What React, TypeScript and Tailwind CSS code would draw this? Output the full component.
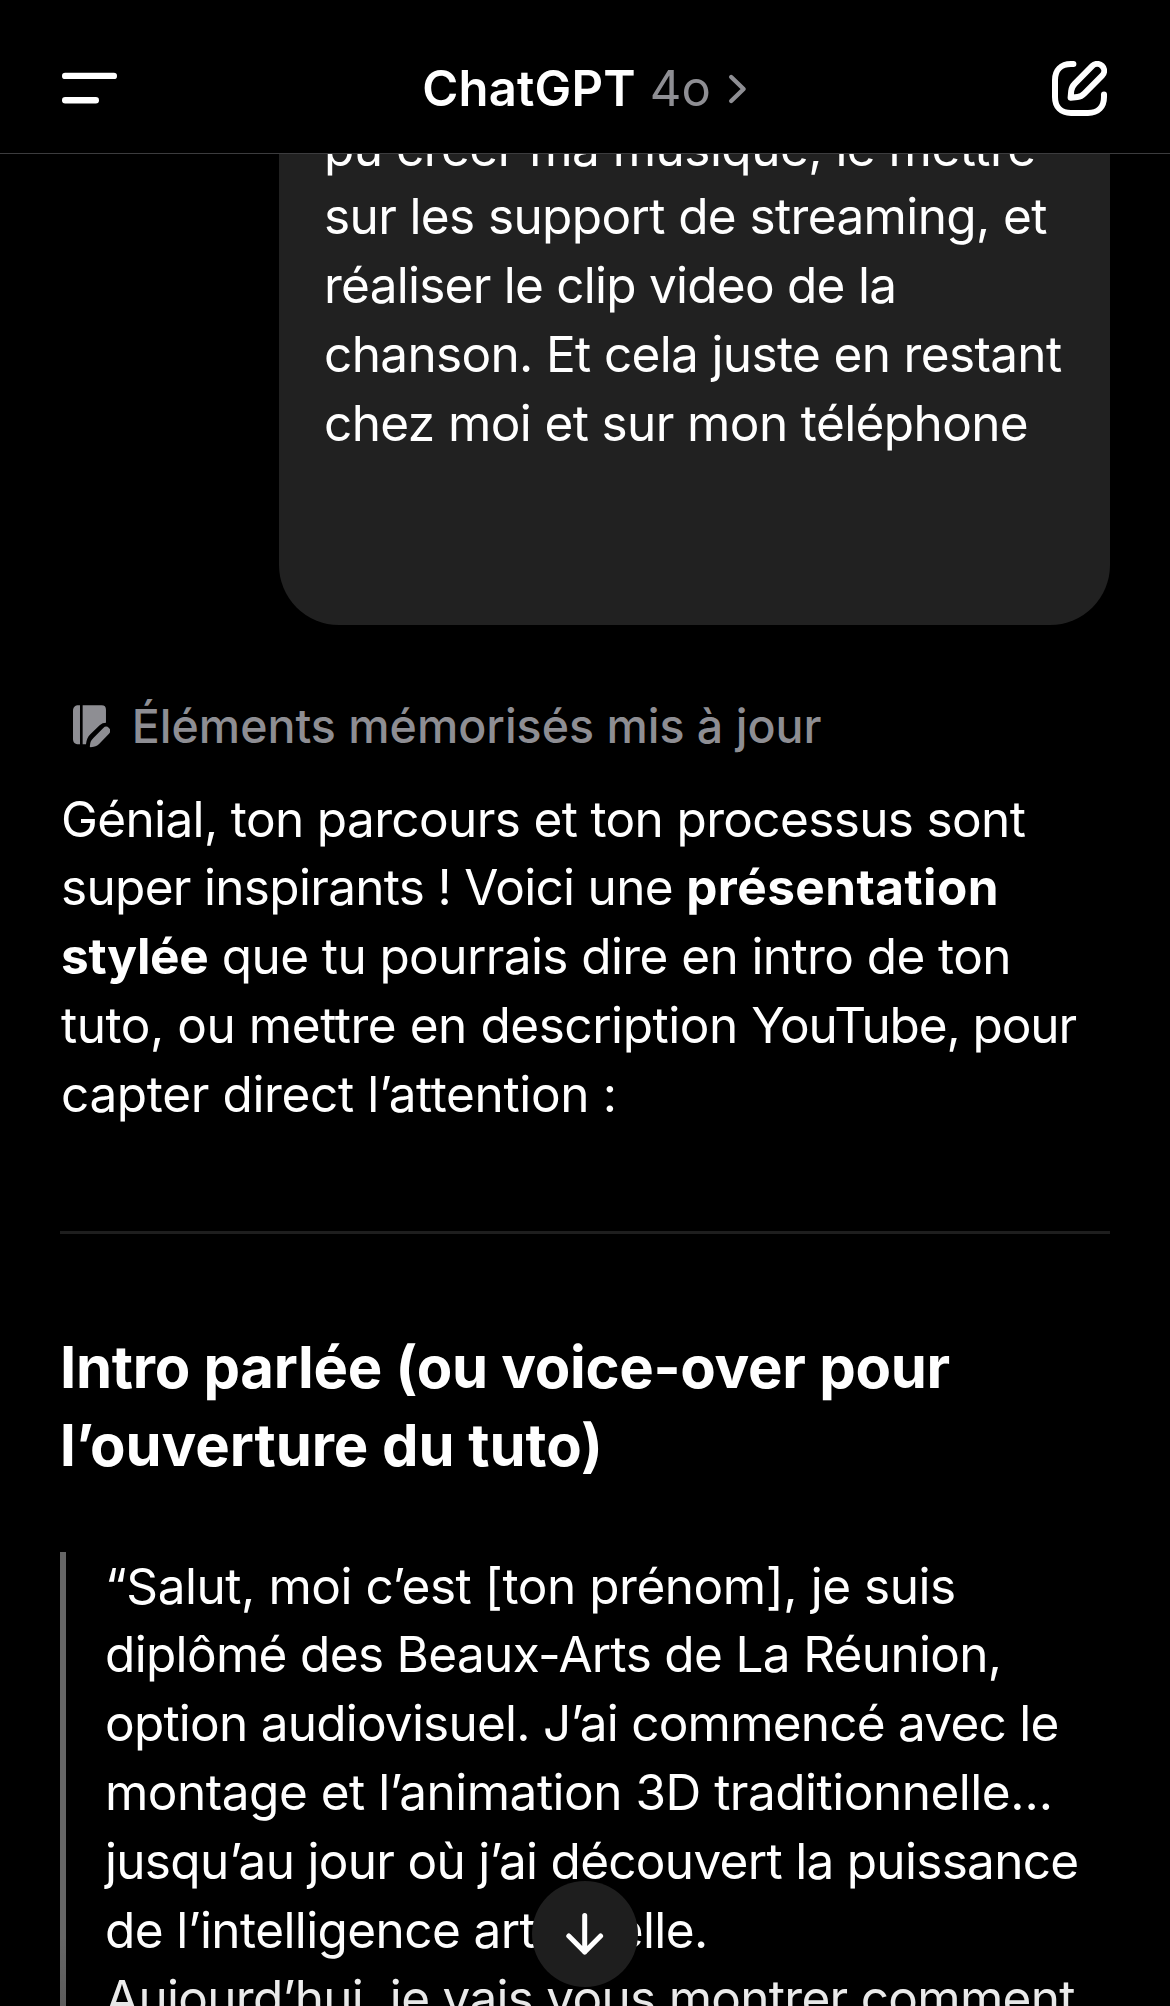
import type { ReactNode } from "react";

type TextLine = {
    text: ReactNode;
    tracking: string;
};

const userMessage: TextLine[] = [
    { text: "pu créer ma musique, le mettre", tracking: "tracking-[-0.52px]" },
    { text: "sur les support de streaming, et", tracking: "tracking-[-0.62px]" },
    { text: "réaliser le clip video de la", tracking: "tracking-[-0.75px]" },
    { text: "chanson. Et cela juste en restant", tracking: "tracking-[-0.65px]" },
    { text: "chez moi et sur mon téléphone", tracking: "tracking-[-0.61px]" },
];

const answer: TextLine[] = [
    { text: "Génial, ton parcours et ton processus sont", tracking: "tracking-[-0.64px]" },
    {
        text: (
            <>
                super inspirants ! Voici une <strong className="font-bold tracking-[0.45px]">présentation</strong>
            </>
        ),
        tracking: "tracking-[-0.69px]",
    },
    {
        text: (
            <>
                <strong className="font-bold tracking-[-0.3px]">stylée</strong> que tu pourrais dire en intro de ton
            </>
        ),
        tracking: "tracking-[-0.59px]",
    },
    {
        text: (
            <>
                <span className="tracking-[-0.45px]">tuto, ou mettre en description </span>YouTube, pour
            </>
        ),
        tracking: "tracking-[-1.1px]",
    },
    { text: "capter direct l’attention :", tracking: "tracking-[-0.36px]" },
];

const heading: TextLine[] = [
    { text: "Intro parlée (ou voice-over pour", tracking: "tracking-[-0.28px]" },
    { text: "l’ouverture du tuto)", tracking: "tracking-[-0.05px]" },
];

const quote: TextLine[] = [
    { text: "“Salut, moi c’est [ton prénom], je suis", tracking: "tracking-[-0.45px]" },
    { text: "diplômé des Beaux-Arts de La Réunion,", tracking: "tracking-[-0.67px]" },
    { text: "option audiovisuel. J’ai commencé avec le", tracking: "tracking-[-0.77px]" },
    { text: "montage et l’animation 3D traditionnelle…", tracking: "tracking-[-0.5px]" },
    { text: "jusqu’au jour où j’ai découvert la puissance", tracking: "tracking-[-0.7px]" },
    { text: "de l’intelligence artificielle.", tracking: "tracking-[-0.6px]" },
    { text: "Aujourd’hui, je vais vous montrer comment", tracking: "tracking-[-0.71px]" },
];

function Lines({ lines }: { lines: TextLine[] }) {
    return (
        <>
            {lines.map((line, i) => (
                <span key={i} className={`block whitespace-nowrap ${line.tracking}`}>
                    {line.text}
                </span>
            ))}
        </>
    );
}

function MenuIcon() {
    return (
        <svg width="56" height="32" viewBox="0 0 56 32" fill="white">
            <rect x="0" y="0.7" width="55" height="6.4" rx="3.2" />
            <rect x="0" y="25.1" width="37" height="6.4" rx="3.2" />
        </svg>
    );
}

function ComposeIcon() {
    return (
        <svg width="55" height="55" viewBox="0 0 55 55" fill="none" stroke="white" strokeWidth="6" strokeLinecap="round" strokeLinejoin="round">
            <path d="M21.4 3H19C9 3 3 9 3 19V36C3 46 9 52 19 52H36C46 52 52 46 52 36V33.6" />
            <path d="M40.3 4.9A6.9 6.9 0 0 1 50.1 14.7L32.5 32.3C30 34.8 28 35.7 25.5 36L18.6 36.8L19.2 30C19.5 27.3 20.5 25 22.8 22.6Z" />
        </svg>
    );
}

function MemoryIcon() {
    return (
        <svg className="mt-[2px]" width="37.3" height="42.3" viewBox="0 0 112 127" fill="#8e8e93">
            <path d="M21 1H17C6 1 0 7 0 18V101C0 112 6 118 17 118H21Z" />
            <path d="M29 1H86Q99 1 99 14V53C92 53 86 55 80 61L52 88C44 96 41 104 39 118H29Z" />
            <path d="M91 69A12 12 0 0 1 108 86L82 113C76 120 70 124 62 125L53 127Q50 127 50.5 124L52 114C53 108 56 104 62 98Z" />
        </svg>
    );
}

function Header() {
    return (
        <header className="h-[154px] shrink-0 border-b border-[#3c3c3e] pl-[62px] pr-[63px] pt-[61px] flex items-start justify-between">
            <button className="pt-[11px]">
                <MenuIcon />
            </button>
            <button className="flex items-center text-[49px] leading-[56px]">
                <span className="font-semibold tracking-[0.2px] text-white">ChatGPT</span>
                <span className="ml-[14px] text-[#8e8e93]">4o</span>
                <svg className="ml-[17px]" width="20" height="32" viewBox="0 0 20 32" fill="none" stroke="#8e8e93" strokeWidth="4.4" strokeLinecap="round" strokeLinejoin="round">
                    <path d="M3.2 4L15.6 16L3.2 28" />
                </svg>
            </button>
            <button>
                <ComposeIcon />
            </button>
        </header>
    );
}

export default function App() {
    return (
        <div className="relative w-[1170px] h-[2006px] overflow-hidden bg-black text-white font-[Inter,sans-serif] flex flex-col">
            <Header />

            <main className="flex-1 min-h-0 overflow-hidden px-[60px] flex flex-col text-[49.5px] leading-[68.8px]">
                {/* The message is scrolled partly under the header */}
                <div className="self-end w-[831px] shrink-0 -mt-[40.4px] rounded-b-[60px] bg-[#212121] pl-[45px] pb-[167px]">
                    <Lines lines={userMessage} />
                </div>

                <div className="mt-[71px] pl-[13px] shrink-0 flex items-center gap-[21.5px] text-[46.5px] leading-[60px] font-medium text-[#8e8e93]">
                    <MemoryIcon />
                    <span>Éléments mémorisés mis à jour</span>
                </div>

                <p className="mt-[29px] shrink-0 pl-px">
                    <Lines lines={answer} />
                </p>

                <hr className="mt-[102.4px] shrink-0 border-0 h-[3px] bg-[#1e1e1e]" />

                <h2 className="mt-[93.6px] shrink-0 text-[58px] leading-[78px] font-bold">
                    <Lines lines={heading} />
                </h2>

                <blockquote className="mt-[68px] shrink-0 border-l-[6px] border-[#666666] pl-[39px]">
                    <Lines lines={quote} />
                </blockquote>
            </main>

            <div className="absolute inset-x-0 bottom-0 h-[70px] bg-linear-to-b from-transparent to-black/10" />
            <button className="absolute bottom-[19px] left-1/2 -translate-x-1/2 size-[106px] rounded-full bg-[#1e1e1e] flex items-center justify-center">
                <svg width="38" height="42" viewBox="0 0 38 42" fill="none" stroke="white" strokeWidth="5" strokeLinecap="round" strokeLinejoin="round">
                    <path d="M18.7 2.5V39M2.8 23L18.7 39L34.6 23" />
                </svg>
            </button>
        </div>
    );
}
